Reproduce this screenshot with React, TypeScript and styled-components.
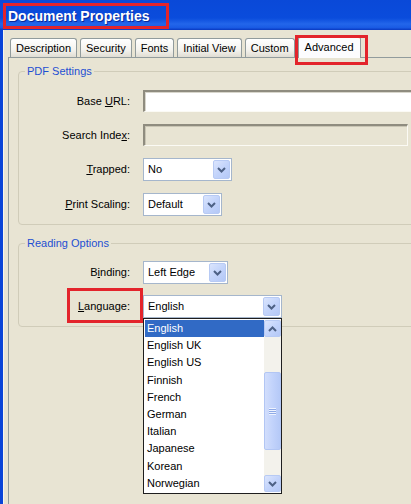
import React from "react";
import styled, { createGlobalStyle, css } from "styled-components";

const GlobalStyle = createGlobalStyle`
  html, body {
    margin: 0;
    padding: 0;
    width: 411px;
    height: 504px;
    overflow: hidden;
    background: #e8e4d3;
  }
  body {
    font-family: "Liberation Sans", Arial, sans-serif;
    font-size: 11px;
    color: #000;
  }
  *, *::before, *::after { box-sizing: border-box; }
`;

const Window = styled.div`
  width: 411px;
  height: 504px;
  overflow: hidden;
  display: flex;
  flex-direction: column;
  background: #e8e4d3;
`;

const TitleBar = styled.div`
  flex: none;
  height: 30px;
  padding: 3px 0 0 3px;
  background: linear-gradient(
    180deg,
    #0a49d8 0%,
    #0a4cdc 60%,
    #2366ea 80%,
    #1a5be4 92%,
    #0838c0 100%
  );
`;

const TitleText = styled.h1`
  margin: 0;
  display: inline-block;
  height: 26px;
  border: 3px solid #e3242b;
  padding: 0 16px 0 2px;
  font: bold 14px/20px "Liberation Sans", Arial, sans-serif;
  color: #fff;
  text-shadow: 1px 1px 0 #0a2a9a;
`;

const Frame = styled.div`
  flex: 1;
  min-height: 0;
  display: flex;
  flex-direction: column;
  border-left: 3px solid #0a44d8;
  box-shadow: inset 1px 0 0 #f7f5ec;
  padding: 6px 0 0 5px;
`;

const TabStrip = styled.div`
  display: flex;
  align-items: flex-end;
  gap: 3px;
  height: 21px;
  padding-left: 2px;
  position: relative;
  z-index: 1;
`;

const Tab = styled.div<{ $active?: boolean }>`
  position: relative;
  height: 19px;
  padding: 0 5px;
  line-height: 18px;
  white-space: nowrap;
  color: #000;
  border: 1px solid #919b9c;
  border-bottom: none;
  border-radius: 3px 3px 0 0;
  background: linear-gradient(#ffffff, #f4f3ee 60%, #e0ddd3);

  ${(p) =>
    p.$active &&
    css`
      height: 22px;
      margin: 0 0 -1px 0;
      padding: 0 6px;
      line-height: 19px;
      background: #fcfcfe;
      border-top: 2px solid #f4b546;

      &::after {
        content: "";
        position: absolute;
        left: -4px;
        right: -8px;
        top: -3px;
        bottom: -7px;
        border: 3px solid #e3242b;
      }
    `}
`;

const Panel = styled.div`
  flex: 1;
  min-width: 0;
  overflow: hidden;
  display: flex;
  flex-direction: column;
  gap: 12px;
  border-top: 1px solid #919b9c;
  border-left: 1px solid #919b9c;
  padding: 7px 0 0 9px;
`;

const Group = styled.fieldset<{ $top: number }>`
  margin: 0 -14px 0 0;
  min-width: 0;
  padding: ${(p) => p.$top}px 0 8px 0;
  border: 1px solid #d0ccb9;
  border-radius: 4px;
`;

const Legend = styled.legend`
  margin-left: 6px;
  padding: 0 2px;
  color: #1e4fd2;
  font-size: 11px;
  line-height: 13px;
`;

const FormGrid = styled.div<{ $gap: number }>`
  display: grid;
  grid-template-columns: 112px 1fr;
  column-gap: 12px;
  row-gap: ${(p) => p.$gap}px;
  align-items: center;
  justify-items: start;
`;

const FieldLabel = styled.label<{ $marked?: boolean }>`
  justify-self: end;
  position: relative;
  white-space: nowrap;
  padding-right: 1px;
  line-height: 13px;
  color: #000;

  ${(p) =>
    p.$marked &&
    css`
      &::after {
        content: "";
        position: absolute;
        left: -11px;
        right: -12px;
        top: -12px;
        bottom: -10px;
        border: 3px solid #e3242b;
      }
    `}
`;

const Key = styled.span`
  text-decoration: underline;
`;

const TextField = styled.div<{ $width?: number; $disabled?: boolean }>`
  height: 22px;
  width: ${(p) => (p.$width ? `${p.$width}px` : "100%")};
  background: ${(p) => (p.$disabled ? "#e8e4d3" : "#ffffff")};
  border-style: solid;
  border-width: 2px 1px 1px 2px;
  border-color: #8f8c7f #fbfaf4 #fbfaf4 #8f8c7f;
  box-shadow: inset 1px 1px 0 ${(p) => (p.$disabled ? "#c9c5b4" : "#d8d6cc")};
`;

const Combo = styled.div<{ $width: number }>`
  position: relative;
  width: ${(p) => p.$width}px;
  height: 23px;
  display: flex;
  padding: 1px;
  border: 1px solid #a5b6cc;
  background: #ffffff;
`;

const ComboValue = styled.span`
  flex: 1;
  padding-left: 3px;
  line-height: 19px;
  white-space: nowrap;
`;

const ArrowButton = styled.span<{ $square?: boolean }>`
  flex: none;
  width: 17px;
  height: ${(p) => (p.$square ? "17px" : "auto")};
  display: grid;
  place-items: center;
  border: 1px solid #b7caf4;
  border-radius: 2px;
  background: linear-gradient(135deg, #dbe5fd 0%, #c3d4fb 50%, #b4c8f6 100%);
`;

const ListBox = styled.div`
  position: absolute;
  z-index: 5;
  top: calc(100% + 1px);
  left: -1px;
  right: -1px;
  height: 176px;
  display: flex;
  padding: 1px 0 1px 1px;
  border: 1px solid #1e1e1e;
  background: #ffffff;
`;

const Options = styled.ul`
  flex: 1;
  margin: 0;
  padding: 0;
  list-style: none;
`;

const Option = styled.li<{ $selected?: boolean }>`
  height: 17.2px;
  line-height: 17.2px;
  padding-left: 2px;
  white-space: nowrap;
  color: ${(p) => (p.$selected ? "#ffffff" : "#000000")};
  background: ${(p) => (p.$selected ? "#316ac5" : "transparent")};
`;

const ScrollBar = styled.div`
  flex: none;
  width: 17px;
  display: flex;
  flex-direction: column;
  background: #f3f2ec;
`;

const Track = styled.div`
  flex: 1;
  padding-top: 35px;
`;

const Thumb = styled.div`
  height: 78px;
  display: grid;
  place-items: center;
  border: 1px solid #b2c6f4;
  border-radius: 2px;
  background: linear-gradient(90deg, #d2defc 0%, #c2d3fb 50%, #b5c9f7 100%);
`;

const Grip = styled.span`
  width: 7px;
  height: 7px;
  background: repeating-linear-gradient(
    180deg,
    #eef3ff 0px,
    #eef3ff 1px,
    #8faae6 1px,
    #8faae6 2px
  );
`;

const Chevron: React.FC<{ up?: boolean }> = ({ up }) => (
  <svg width="9" height="6" viewBox="0 0 9 6" aria-hidden="true">
    <path
      d={up ? "M1 5 L4.5 1.5 L8 5" : "M1 1 L4.5 4.5 L8 1"}
      fill="none"
      stroke="#4d6185"
      strokeWidth="2"
    />
  </svg>
);

const TABS = ["Description", "Security", "Fonts", "Initial View", "Custom", "Advanced"];

const LANGUAGES = [
  "English",
  "English UK",
  "English US",
  "Finnish",
  "French",
  "German",
  "Italian",
  "Japanese",
  "Korean",
  "Norwegian",
];

export default function App() {
  return (
    <>
      <GlobalStyle />
      <Window>
        <TitleBar>
          <TitleText>Document Properties</TitleText>
        </TitleBar>
        <Frame>
          <TabStrip>
            {TABS.map((t) => (
              <Tab key={t} $active={t === "Advanced"}>
                {t}
              </Tab>
            ))}
          </TabStrip>
          <Panel>
            <Group $top={12}>
              <Legend>PDF Settings</Legend>
              <FormGrid $gap={12}>
                <FieldLabel>
                  Base <Key>U</Key>RL:
                </FieldLabel>
                <TextField />
                <FieldLabel>
                  Search Inde<Key>x</Key>:
                </FieldLabel>
                <TextField $width={265} $disabled />
                <FieldLabel>
                  <Key>T</Key>rapped:
                </FieldLabel>
                <Combo $width={89}>
                  <ComboValue>No</ComboValue>
                  <ArrowButton>
                    <Chevron />
                  </ArrowButton>
                </Combo>
                <FieldLabel>
                  <Key>P</Key>rint Scaling:
                </FieldLabel>
                <Combo $width={79}>
                  <ComboValue>Default</ComboValue>
                  <ArrowButton>
                    <Chevron />
                  </ArrowButton>
                </Combo>
              </FormGrid>
            </Group>
            <Group $top={11}>
              <Legend>Reading Options</Legend>
              <FormGrid $gap={11}>
                <FieldLabel>
                  B<Key>i</Key>nding:
                </FieldLabel>
                <Combo $width={85}>
                  <ComboValue>Left Edge</ComboValue>
                  <ArrowButton>
                    <Chevron />
                  </ArrowButton>
                </Combo>
                <FieldLabel $marked>
                  <Key>L</Key>anguage:
                </FieldLabel>
                <Combo $width={139}>
                  <ComboValue>English</ComboValue>
                  <ArrowButton>
                    <Chevron />
                  </ArrowButton>
                  <ListBox>
                    <Options>
                      {LANGUAGES.map((l, i) => (
                        <Option key={l} $selected={i === 0}>
                          {l}
                        </Option>
                      ))}
                    </Options>
                    <ScrollBar>
                      <ArrowButton $square>
                        <Chevron up />
                      </ArrowButton>
                      <Track>
                        <Thumb>
                          <Grip />
                        </Thumb>
                      </Track>
                      <ArrowButton $square>
                        <Chevron />
                      </ArrowButton>
                    </ScrollBar>
                  </ListBox>
                </Combo>
              </FormGrid>
            </Group>
          </Panel>
        </Frame>
      </Window>
    </>
  );
}
